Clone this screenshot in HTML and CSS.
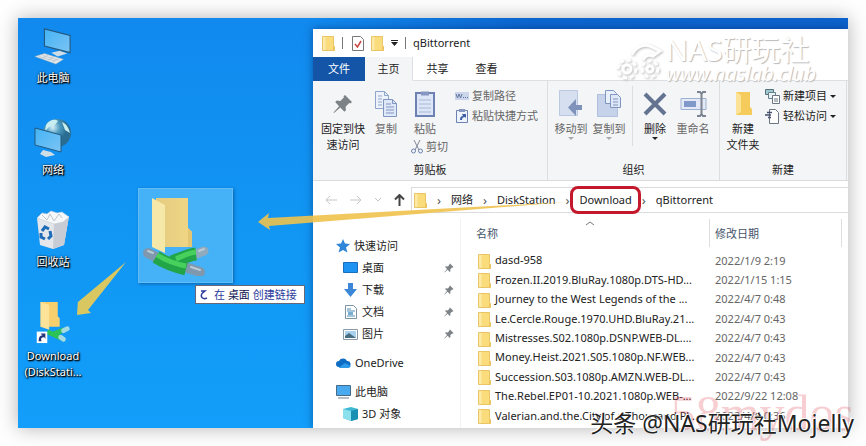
FILE: index.html
```html
<!DOCTYPE html>
<html lang="zh-CN">
<head>
    <meta charset="UTF-8">
    <meta name="viewport" content="width=device-width, initial-scale=1.0">
    <title>qBittorrent</title>
    <link rel="stylesheet" href="styles.css">
</head>
<body>
    <!-- shared icons -->
    <svg class="defs" width="0" height="0">
        <defs>
            <linearGradient id="gold" x1="0" x2="1"><stop offset="0" stop-color="#e4cb80"/><stop offset="1" stop-color="#f0d684"/></linearGradient>
            <linearGradient id="glass" x1="0" y1="0" x2="1" y2="1"><stop offset="0" stop-color="#45b4f5"/><stop offset="1" stop-color="#7cc4f4"/></linearGradient>
            <radialGradient id="globe" cx=".35" cy=".3"><stop offset="0" stop-color="#d8f0f7"/><stop offset=".5" stop-color="#4f9cc0"/><stop offset="1" stop-color="#2b6c92"/></radialGradient>
            <symbol id="folder" viewBox="0 0 13 15">
                <path d="M.5 .5h11v9l1 .8v4.2H.5z" fill="#fbdc7c" stroke="#e9c566"/>
                <path d="M1 1h2.500v13H1z" fill="#fdeaa8"/>
                <path d="M11 10l1.500 1v3.500H11z" fill="#eec25a"/>
            </symbol>
            <symbol id="pin" viewBox="0 0 20 20">
                <path d="M12 1l7 7-1.600 1.500-1.200-.5-3.600 3.700.3 3.600-1.500 1.500-4.100-4.200L1 19l-.5-.5 5.600-6.300L2.200 8.100l1.500-1.500 3.700.3L11 3.300l-.5-1z"/>
            </symbol>
            <symbol id="monitor" viewBox="0 0 40 40">
                <path d="M11 2l27 7v18L11 20z" fill="url(#glass)" stroke="#235a80" stroke-width="1.200"/>
                <path d="M18 27l9-2 8 3-10 3z" fill="#cfdde4"/>
                <path d="M1 31l10-3 20 6-8 5z" fill="#e4e9ec" stroke="#9fb4c0" stroke-width=".5"/>
                <path d="M5 31l17 5M9 30l17 5M9 33l6-4M15 35l6-4M20 37l6-4" stroke="#a9b6bd" stroke-width=".6"/>
            </symbol>
            <symbol id="pipe-folder" viewBox="0 0 68 80">
                <path d="M14 2h32v30l4 4v15H14z" fill="url(#gold)"/>
                <path d="M46 32l4 4v15h-4z" fill="#e3c673"/>
                <path d="M10 2l13 7v48l-13-6z" fill="#f6e8a8"/>
                <path d="M6 57l8 4" stroke="#7f98ad" stroke-width="10" stroke-linecap="round"/>
                <path d="M62 55l-8 3" stroke="#8fa9bd" stroke-width="9" stroke-linecap="round"/>
                <path d="M46 72l12 4" stroke="#7f98ad" stroke-width="10" stroke-linecap="round"/>
                <path d="M14 61c8 5 18 9 30 12M54 58c-8 1-14 4-24 8" stroke="#22a548" stroke-width="13" fill="none"/>
                <path d="M15 59c8 5 18 9 29 11M54 56c-8 1-13 4-20 7" stroke="#48d05c" stroke-width="5" fill="none"/>
                <path d="M49 71l9 3M6 55l5 2M57 55l5-2" stroke="#bccbd8" stroke-width="2" stroke-linecap="round"/>
            </symbol>
            <symbol id="pages" viewBox="0 0 22 26">
                <path d="M.5 .5h9l4 4v13H.5z" fill="#edf2fb" stroke="#8ea4cb"/>
                <path d="M9.500 .5v4h4M3 5h4M3 8h4M3 11h4M3 14h4" fill="none" stroke="#8ea4cb"/>
                <path d="M8.500 8.500h9l4 4v13h-13z" fill="#dfe8f8" stroke="#8095c0"/>
                <path d="M17.500 8.500v4h4M11 13h5M11 16h8M11 19h8M11 22h8" fill="none" stroke="#8095c0"/>
            </symbol>
        </defs>
    </svg>

    <main class="desktop">
        <nav class="shortcuts">
            <a class="shortcut" href="#">
                <svg width="38" height="40"><use href="#monitor"/></svg>
                <span>此电脑</span>
            </a>
            <a class="shortcut" href="#">
                <svg width="38" height="40" viewBox="0 0 38 40">
                    <circle cx="23" cy="15" r="14" fill="url(#globe)"/>
                    <path d="M12 7c4-6 9-6 12-4l-4 5-5 1-4 4zM28 4c5 2 7 7 8 11l-5-3z" fill="#c9eef1"/>
                    <path d="M1 10l26 7v17L1 27z" fill="url(#glass)" stroke="#235a80"/>
                    <path d="M9 32l8 2 4 3-9 2-6-3z" fill="#cfdde4"/>
                </svg>
                <span>网络</span>
            </a>
            <a class="shortcut" href="#">
                <svg width="38" height="40" viewBox="0 0 38 40">
                    <path d="M3 8l17 4 15-6-5 29-11 4-13-4z" fill="#e3e6ea"/>
                    <path d="M20 12l15-6-5 29-11 4z" fill="#c8ccd4"/>
                    <path d="M3 8l5-5 5 1 4-3 6 2 5-1 7 5-6 5-9 2z" fill="#f7f8f9" stroke="#c5ced6" stroke-width=".6"/>
                    <path d="M8 5l5 5 3-6 4 7 5-7 3 4" fill="none" stroke="#bcc5cd"/>
                    <path d="M8 21l3-4 4 2M16 21l1 5-3 3M11 29l-4-2 0-4" fill="none" stroke="#1e6bb8" stroke-width="3"/>
                </svg>
                <span>回收站</span>
            </a>
            <a class="shortcut" href="#">
                <svg width="38" height="42" viewBox="0 0 38 44">
                    <path d="M6 0h18v15l2 2v9H6z" fill="#f7cf6c"/>
                    <path d="M6 0l9 3v26l-9-3z" fill="#fde39a"/>
                    <path d="M13 31l15 7M31 29l-13 5" stroke="#2dc255" stroke-width="5"/>
                    <path d="M27 37l3 2M30 30l4-2" stroke="#a3dbe0" stroke-width="5" stroke-linecap="round"/>
                    <path d="M2 31h11v12H2z" fill="#fff"/>
                    <path d="M4 41c0-4 1-6 4-6l-2-2h5v6l-1-2c-3 0-4 1-3 4z" fill="#25357c"/>
                </svg>
                <span>Download<br>(DiskStati...</span>
            </a>
        </nav>

        <section class="explorer">
            <header class="titlebar">
                <svg width="13" height="15"><use href="#folder"/></svg>
                <i class="bar"></i>
                <svg class="check" width="12" height="15" viewBox="0 0 12 15">
                    <path d="M.5 .5h8l3 3v11H.5z" fill="#fff" stroke="#777"/>
                    <path d="M3 8l2.500 3L9 5" fill="none" stroke="#c8453f" stroke-width="1.500"/>
                </svg>
                <svg width="13" height="15"><use href="#folder"/></svg>
                <svg width="7" height="6" viewBox="0 0 7 6"><path d="M0 .5h7" stroke="#222"/><path d="M0 2h7L3.500 6z" fill="#222"/></svg>
                <i class="bar"></i>
                <h1>qBittorrent</h1>
            </header>

            <div class="tabs">
                <button class="tab file">文件</button>
                <button class="tab active">主页</button>
                <button class="tab">共享</button>
                <button class="tab">查看</button>
            </div>

            <div class="ribbon">
                <div class="group clipboard">
                    <div class="tools">
                        <button class="tool wide">
                            <svg class="pin" width="20" height="20"><use href="#pin"/></svg>
                            <span>固定到快<br>速访问</span>
                        </button>
                        <button class="tool narrow off">
                            <svg width="22" height="26"><use href="#pages"/></svg>
                            <span>复制</span>
                        </button>
                        <div class="stack">
                            <button class="tool off">
                                <svg width="20" height="27" viewBox="0 0 20 27">
                                    <path d="M1 3h18v23H1z" fill="#dce6f7" stroke="#6d82b3" stroke-width="2"/>
                                    <path d="M6 1.500h8v4H6z" fill="#8698c2"/>
                                    <path d="M4 10h12M4 14h12M4 18h12M4 22h12" stroke="#a9b8d8"/>
                                </svg>
                                <span>粘贴</span>
                            </button>
                            <button class="mini off">
                                <svg width="12" height="14" viewBox="0 0 12 14">
                                    <path d="M3 0l5 10M9 0L4 10" stroke="#7f8794" fill="none"/>
                                    <circle cx="2.500" cy="11" r="2" fill="none" stroke="#6f82b0"/>
                                    <circle cx="9.500" cy="11" r="2" fill="none" stroke="#6f82b0"/>
                                </svg>
                                剪切
                            </button>
                        </div>
                        <div class="list">
                            <button class="mini off">
                                <svg width="14" height="14" viewBox="0 0 14 14">
                                    <path d="M0 3h14v8H0z" fill="#ccd6ea"/>
                                    <path d="M1 5l1.500 4L4 5l1.500 4L7 5M8 8.500h1M10 8.500h1M12 8.500h1" stroke="#6577a4" fill="none"/>
                                </svg>
                                复制路径
                            </button>
                            <button class="mini off">
                                <svg width="14" height="16" viewBox="0 0 14 16">
                                    <path d="M1.500 2.500h11v12h-11z" fill="#eef3fc" stroke="#6d82b3"/>
                                    <path d="M4 1h6v3H4z" fill="#8698c2"/>
                                    <path d="M5 12c0-3 1-4 3-4L7 6h4v4l-1-1c-2 0-3 1-3 3z" fill="#3f5fa5"/>
                                </svg>
                                粘贴快捷方式
                            </button>
                        </div>
                    </div>
                    <div class="caption">剪贴板</div>
                </div>

                <div class="group organize">
                    <div class="tools">
                        <button class="tool off">
                            <svg width="24" height="27" viewBox="0 0 24 27">
                                <path d="M.5 .5h18v25H.5z" fill="#d5dff0" stroke="#bac8e2"/>
                                <path d="M23 15h-6v-6l-8 8.500 8 8.500v-6h6z" fill="#7e92ba"/>
                            </svg>
                            <span>移动到</span>
                            <i class="arrow"></i>
                        </button>
                        <button class="tool off">
                            <svg width="25" height="27" viewBox="0 0 25 27">
                                <path d="M.5 4.500h20v22H.5z" fill="#c5d2e9" stroke="#b0c0de"/>
                                <path d="M8.500 .5h8l3 3v10h-11z" fill="#eaf0fa" stroke="#8095c0"/>
                                <path d="M13.500 4.500h7l3 3v10h-10zM16 9h5M16 12h5M16 15h5" fill="#dfe8f8" stroke="#8095c0"/>
                            </svg>
                            <span>复制到</span>
                            <i class="arrow"></i>
                        </button>
                        <i class="divider"></i>
                        <button class="tool">
                            <svg width="24" height="25" viewBox="0 0 24 25"><path d="M2 3l20 20M22 3L2 23" stroke="#64738f" stroke-width="4"/></svg>
                            <span>删除</span>
                            <i class="arrow"></i>
                        </button>
                        <button class="tool off">
                            <svg width="27" height="26" viewBox="0 0 27 26">
                                <path d="M1 7.500h25v11H1z" fill="#e3eaf6" stroke="#9fb1d3"/>
                                <path d="M4 10h12v6H4z" fill="#8199c8"/>
                                <path d="M17 1h3l1.500 2L23 1h3M21.500 2v22M17 25h3l1.500-2 1.500 2h3" fill="none" stroke="#7c8492" stroke-width="2"/>
                            </svg>
                            <span>重命名</span>
                        </button>
                    </div>
                    <div class="caption">组织</div>
                </div>

                <div class="group create">
                    <div class="tools">
                        <button class="tool">
                            <svg width="17" height="25" viewBox="0 0 17 25">
                                <path d="M1 1h14v15l2 2v6H1z" fill="#f5cb5c"/>
                                <path d="M1 1l5 3v17l-5 3z" fill="#fbe297"/>
                            </svg>
                            <span>新建<br>文件夹</span>
                        </button>
                        <div class="list">
                            <button class="mini">
                                <svg width="15" height="15" viewBox="0 0 15 15">
                                    <path d="M.5 .5h8v5h-8z" fill="#9fc8cf" stroke="#55717c"/>
                                    <path d="M3.500 3.500h7v6h-7z" fill="#e8f2f5" stroke="#66808c"/>
                                    <path d="M7.500 6.500h7v8h-7zM9 10h4M9 12h4" fill="#fff" stroke="#6a7684"/>
                                </svg>
                                新建项目
                                <i class="arrow"></i>
                            </button>
                            <button class="mini">
                                <svg width="15" height="15" viewBox="0 0 15 15">
                                    <path d="M4.500 .5h6l3 3v11h-9z" fill="#fff" stroke="#6a7684"/>
                                    <path d="M2 3.500h5M0 6h6M3 8.500h3" stroke="#44506b" stroke-width="1.500"/>
                                </svg>
                                轻松访问
                                <i class="arrow"></i>
                            </button>
                        </div>
                    </div>
                    <div class="caption">新建</div>
                </div>
            </div>

            <div class="address">
                <div class="history">
                    <button class="nav dim" aria-label="后退"><svg width="12" height="10" viewBox="0 0 12 10"><path d="M12 5H1M5 1L1 5l4 4"/></svg></button>
                    <button class="nav dim" aria-label="前进"><svg width="12" height="10" viewBox="0 0 12 10"><path d="M0 5h11M7 1l4 4-4 4"/></svg></button>
                    <button class="nav dim" aria-label="历史"><svg width="6" height="4" viewBox="0 0 6 4"><path d="M0 0l3 3 3-3"/></svg></button>
                    <button class="nav" aria-label="向上"><svg width="11" height="12" viewBox="0 0 11 12"><path d="M5.500 12V1M1 5.500L5.500 1 10 5.500"/></svg></button>
                </div>
                <nav class="path">
                    <svg width="13" height="15"><use href="#folder"/></svg>
                    <i>›</i>
                    <a href="#">网络</a>
                    <i>›</i>
                    <a href="#">DiskStation</a>
                    <i>›</i>
                    <a class="marked" href="#">Download</a>
                    <i>›</i>
                    <a href="#">qBittorrent</a>
                </nav>
            </div>

            <div class="content">
                <nav class="sidebar">
                    <div class="branch">
                        <a href="#"><svg width="14" height="14" viewBox="0 0 14 14"><path d="M7 0l2 4.500 5 .5-4 3.500 1.500 5L7 11l-4.500 2.500L4 8.500 0 5l5-.5z" fill="#2f86d8"/></svg>快速访问</a>
                        <a class="child" href="#"><svg width="15" height="14" viewBox="0 0 15 14"><path d="M.5 1.500h14v10H.5z" fill="#1d94f2" stroke="#1670bd"/></svg>桌面<svg class="pin" width="10" height="10"><use href="#pin"/></svg></a>
                        <a class="child" href="#"><svg width="15" height="14" viewBox="0 0 15 14"><path d="M5 0h5v6h4l-6.500 8L1 6h4z" fill="#3b86d6"/></svg>下载<svg class="pin" width="10" height="10"><use href="#pin"/></svg></a>
                        <a class="child" href="#"><svg width="15" height="14" viewBox="0 0 15 14"><path d="M2.500 .5h8l3 3v10h-11z" fill="#fff" stroke="#7d94a3"/><path d="M4 4h4M4 6h8M4 11h8" stroke="#4b8bb5"/><path d="M5 7h5v3H5z" fill="#79aed0"/></svg>文档<svg class="pin" width="10" height="10"><use href="#pin"/></svg></a>
                        <a class="child" href="#"><svg width="15" height="14" viewBox="0 0 15 14"><path d="M.5 2.500h14v10H.5z" fill="#fff" stroke="#8a9aa6"/><path d="M2 4h11v7H2z" fill="#a8d2ee"/><path d="M2 9l4-3 7 5H2z" fill="#496d80"/></svg>图片<svg class="pin" width="10" height="10"><use href="#pin"/></svg></a>
                    </div>
                    <div class="branch">
                        <a href="#"><svg width="15" height="10" viewBox="0 0 15 10"><path d="M3 9a3 3 0 0 1 0-6 4.500 4.500 0 0 1 8 0 3 3 0 0 1 1 6z" fill="#0f6cc4"/><path d="M3 9.500l6-4.500 6 3-2 2H3z" fill="#2d9ae8"/></svg>OneDrive</a>
                    </div>
                    <div class="branch">
                        <a href="#"><svg width="15" height="14" viewBox="0 0 15 14"><path d="M.5 .5h14v10H.5z" fill="#4aaaf0" stroke="#496b85"/><path d="M2 13h11" stroke="#71818c"/></svg>此电脑</a>
                        <a class="child" href="#"><svg width="15" height="14" viewBox="0 0 15 14"><path d="M0 2l8-2 7 2v10l-7 2-8-3z" fill="#3db7d3"/><path d="M0 2l8 2v10l-8-3z" fill="#8be0ed"/><path d="M8 4l7-2v10l-7 2z" fill="#1790b4"/></svg>3D 对象</a>
                    </div>
                </nav>

                <table class="files">
                    <thead>
                        <tr><th class="name">名称<svg class="sort" width="8" height="5" viewBox="0 0 8 5"><path d="M0 4l4-3 4 3" fill="none" stroke="#777"/></svg></th><th class="date">修改日期</th><th></th></tr>
                    </thead>
                    <tbody>
                        <tr><td><svg width="13" height="15"><use href="#folder"/></svg>dasd-958</td><td>2022/1/9 2:19</td><td></td></tr>
                        <tr><td><svg width="13" height="15"><use href="#folder"/></svg>Frozen.II.2019.BluRay.1080p.DTS-HD...</td><td>2022/1/15 1:15</td><td></td></tr>
                        <tr><td><svg width="13" height="15"><use href="#folder"/></svg>Journey to the West Legends of the ...</td><td>2022/4/7 0:48</td><td></td></tr>
                        <tr><td><svg width="13" height="15"><use href="#folder"/></svg>Le.Cercle.Rouge.1970.UHD.BluRay.21...</td><td>2022/4/7 0:43</td><td></td></tr>
                        <tr><td><svg width="13" height="15"><use href="#folder"/></svg>Mistresses.S02.1080p.DSNP.WEB-DL....</td><td>2022/4/7 0:43</td><td></td></tr>
                        <tr><td><svg width="13" height="15"><use href="#folder"/></svg>Money.Heist.2021.S05.1080p.NF.WEB...</td><td>2022/4/7 0:43</td><td></td></tr>
                        <tr><td><svg width="13" height="15"><use href="#folder"/></svg>Succession.S03.1080p.AMZN.WEB-DL...</td><td>2022/4/7 0:43</td><td></td></tr>
                        <tr><td><svg width="13" height="15"><use href="#folder"/></svg>The.Rebel.EP01-10.2021.1080p.WEB-...</td><td>2022/9/22 12:08</td><td></td></tr>
                        <tr><td><svg width="13" height="15"><use href="#folder"/></svg>Valerian.and.the.City.of.a.Thousand.Pl...</td><td>2022/4/6 0:36</td><td></td></tr>
                        <tr><td><svg width="13" height="15"><use href="#folder"/></svg></td><td></td><td></td></tr>
                    </tbody>
                </table>
            </div>
        </section>

        <div class="ghost"><svg width="68" height="80"><use href="#pipe-folder"/></svg></div>
        <div class="hint">
            <svg width="8" height="10" viewBox="0 0 8 10"><path d="M1 1h4L2 3.500C0 7 3 10 7 8" fill="none" stroke="#2b3b9c" stroke-width="1.500"/></svg>
            <span>在 <b>桌面</b> 创建链接</span>
        </div>

        <svg class="pointers" width="580" height="330" viewBox="0 0 580 330">
            <path d="M240 204l11-9-1 5 299-16-298 24 1 4z" fill="#efc24d" opacity=".9"/>
            <path d="M108 244L60 284l0-2-1 15 14-2-3-3z" fill="#d9c862"/>
        </svg>
    </main>

    <div class="brand">
        <svg width="52" height="46" viewBox="0 0 52 46">
            <path d="M18 18c4-9 14-12 20-8l8 4-7 5c-5-2-8 0-10 4"/>
            <circle cx="13" cy="32" r="9" stroke-dasharray="4 3"/>
            <circle cx="13" cy="32" r="4"/>
            <circle cx="36" cy="32" r="8" stroke-dasharray="4 3"/>
            <circle cx="36" cy="32" r="3"/>
        </svg>
        <p>NAS研玩社<small>www.naslab.club</small></p>
    </div>
    <div class="stamp">58mydos</div>
    <div class="credit">头条 @NAS研玩社Mojelly</div>
</body>
</html>
```

FILE: styles.css
```css
* {
    box-sizing: border-box;
    margin: 0;
    padding: 0;
}

body {
    height: 100vh;
    padding: 18px;
    background: #fefefe;
    font-family: "Noto Sans", "Noto Sans CJK SC", sans-serif;
    font-size: 11px;
    line-height: 16px;
    color: #222;
    overflow: hidden;
    position: relative;
}

button {
    border: 0;
    background: none;
    font: inherit;
    color: inherit;
}

a {
    color: inherit;
    text-decoration: none;
}

svg {
    flex: none;
}

.defs {
    position: absolute;
}

.desktop {
    position: relative;
    height: 100%;
    background: linear-gradient(180deg, #1189ee, #1196f4 50%, #129efa);
    box-shadow: 0 0 18px rgba(0, 0, 0, 0.3);
    overflow: hidden;
}

.desktop::before {
    content: '';
    position: absolute;
    top: 0;
    right: 0;
    width: 64%;
    height: 11px;
    background: linear-gradient(90deg, #1189ee, #0c66d0 40%, #0d62cc);
}

/* Desktop icons */
.shortcuts {
    display: flex;
    flex-direction: column;
    gap: 28px;
    width: 70px;
    padding-top: 8px;
}

.shortcut {
    display: flex;
    flex-direction: column;
    align-items: center;
    gap: 4px;
    height: 64px;
    line-height: 16px;
    text-align: center;
    color: #fff;
    text-shadow: 1px 1px 1px #000, 1px 1px 2px #000, 0 0 2px #000;
}

/* Explorer window */
.explorer {
    position: absolute;
    top: 11px;
    right: 0;
    bottom: 0;
    left: 295px;
    display: flex;
    flex-direction: column;
    background: #fff;
    box-shadow: 0 0 8px rgba(0, 30, 90, 0.5);
    overflow: hidden;
}

.titlebar {
    display: flex;
    align-items: center;
    gap: 7px;
    height: 28px;
    padding-left: 9px;
}

.titlebar .check {
    margin-left: 2px;
}

.titlebar h1 {
    font-size: 11px;
    font-weight: 400;
}

.bar {
    width: 1px;
    height: 12px;
    background: #777;
}

.tabs {
    display: flex;
    height: 24px;
}

.tab {
    width: 49px;
    border-bottom: 1px solid #dcdfe3;
}

.tab.file {
    width: 52px;
    background: #1555a8;
    border-color: #1555a8;
    color: #fff;
}

.tab.active {
    width: 48px;
    background: #f4f5f6;
    border-right: 1px solid #dcdfe3;
    border-bottom-color: #f4f5f6;
}

.tabs::after {
    content: '';
    flex: 1;
    border-bottom: 1px solid #dcdfe3;
}

.ribbon {
    display: flex;
    height: 100px;
    background: #f4f5f6;
    border-bottom: 1px solid #dadbdc;
}

.group {
    display: flex;
    flex-direction: column;
    border-right: 1px solid #dcdddf;
}

.group.clipboard {
    width: 235px;
}

.group.organize {
    width: 172px;
}

.group.create {
    width: 127px;
}

.tools {
    display: flex;
    flex: 1;
    padding: 5px 0 0 4px;
}

.clipboard .tools {
    gap: 6px;
    padding-left: 6px;
}

.create .tools {
    gap: 3px;
}

.caption {
    height: 18px;
    text-align: center;
}

.tool {
    display: grid;
    flex: none;
    grid-template-rows: 35px;
    grid-template-columns: 100%;
    align-content: start;
    align-items: center;
    justify-items: center;
    width: 38px;
    white-space: nowrap;
}

.tool.wide {
    width: 48px;
}

.tool.narrow {
    width: 26px;
}

.off {
    color: #666;
}

.arrow {
    border: 3px solid transparent;
    border-top-color: currentColor;
    border-bottom: 0;
}

.off .arrow {
    border-top-color: #aaa;
}

.stack {
    display: flex;
    flex-direction: column;
    width: 44px;
}

.stack .tool {
    width: 40px;
}

.stack .mini {
    padding-left: 6px;
}

.list {
    display: flex;
    flex-direction: column;
}

.mini {
    display: flex;
    align-items: center;
    gap: 3px;
    height: 20px;
    white-space: nowrap;
}

.pin {
    fill: #7d8287;
}

.divider {
    width: 1px;
    height: 60px;
    margin: 0 3px 0 4px;
    background: #dcdddf;
}

/* Address bar */
.address {
    display: flex;
    gap: 6px;
    height: 38px;
    padding: 6px 0;
}

.history {
    display: flex;
    align-items: center;
    justify-content: space-between;
    width: 92px;
    padding-left: 12px;
}

.nav svg {
    display: block;
    fill: none;
    stroke: #444;
    stroke-width: 2;
}

.nav.dim svg {
    stroke: #c4c6c8;
    stroke-width: 1;
}

.path {
    display: flex;
    flex: 1;
    align-items: center;
    gap: 9px;
    padding-left: 2px;
    border: 1px solid #dcdcdc;
    border-right: 0;
}

.path i {
    width: 6px;
    font-size: 13px;
    font-style: normal;
    text-align: center;
    color: #555;
}

.marked {
    position: relative;
}

.marked::after {
    content: '';
    position: absolute;
    inset: -6px -9px;
    border: 3px solid #c4182c;
    border-radius: 8px;
}

/* Folder tree and file list */
.content {
    display: flex;
    flex: 1;
    min-height: 0;
}

.sidebar {
    display: flex;
    flex: none;
    flex-direction: column;
    gap: 7px;
    width: 148px;
    padding-top: 16px;
    border-right: 1px solid #f2f2f2;
}

.branch a {
    display: flex;
    align-items: center;
    gap: 4px;
    height: 22px;
    padding: 0 6px 0 23px;
}

.branch .child {
    padding-left: 30px;
}

.branch .pin {
    margin-left: auto;
}

.files {
    width: 100%;
    height: 226px;
    border-collapse: collapse;
    table-layout: fixed;
}

.files th {
    position: relative;
    height: 32px;
    padding: 0 0 2px 15px;
    font-weight: 400;
    text-align: left;
    color: #44546a;
}

.files .name {
    width: 248px;
}

.files .date {
    width: 132px;
    padding-left: 6px;
}

.files .date::before,
.files .date::after {
    content: '';
    position: absolute;
    top: 0;
    left: 0;
    width: 1px;
    height: 28px;
    background: #dedede;
}

.files .date::after {
    left: 100%;
}

.sort {
    position: absolute;
    top: 2px;
    left: 125px;
}

.files td {
    padding-left: 6px;
    white-space: nowrap;
    color: #666;
}

.files td:first-child {
    padding-left: 17px;
    color: #222;
}

.files td svg {
    margin-right: 4px;
    vertical-align: middle;
}

/* Item being dragged */
.ghost {
    position: absolute;
    top: 170px;
    left: 120px;
    display: flex;
    align-items: center;
    width: 95px;
    height: 95px;
    padding-left: 3px;
    background: #45b2f7;
    border: 1px solid #63bdf5;
    box-shadow: 1px 1px 3px rgba(0, 50, 110, 0.5);
}

.hint {
    position: absolute;
    top: 267px;
    left: 177px;
    display: flex;
    align-items: center;
    gap: 6px;
    width: 110px;
    height: 19px;
    padding-left: 4px;
    background: #fff;
    border: 1px solid #667;
    white-space: nowrap;
    color: #2b3b9c;
}

.hint b {
    font-weight: 400;
    color: #0d1350;
}

.pointers {
    position: absolute;
    top: 0;
    left: 0;
}

/* Watermarks */
.brand {
    position: absolute;
    top: 36px;
    right: 50px;
    display: flex;
    align-items: center;
    color: #fff;
    text-shadow: 1px 1px 1px #bbb;
}

.brand svg {
    fill: none;
    stroke: #fff;
    stroke-width: 3;
    filter: drop-shadow(1px 1px 1px #bbb);
}

.brand p {
    font-size: 29px;
    line-height: 28px;
}

.brand small {
    display: block;
    font-size: 20px;
    font-style: italic;
    line-height: 20px;
}

.stamp {
    position: absolute;
    right: 12px;
    bottom: 8px;
    font-family: "Liberation Serif", serif;
    font-size: 50px;
    line-height: 50px;
    color: rgba(225, 60, 70, 0.25);
}

.credit {
    position: absolute;
    right: 12px;
    bottom: 9px;
    font-size: 23px;
    line-height: 28px;
    color: #222;
    text-shadow: -1px -1px 0 #fff, 1px 0 0 #fff;
}
```
